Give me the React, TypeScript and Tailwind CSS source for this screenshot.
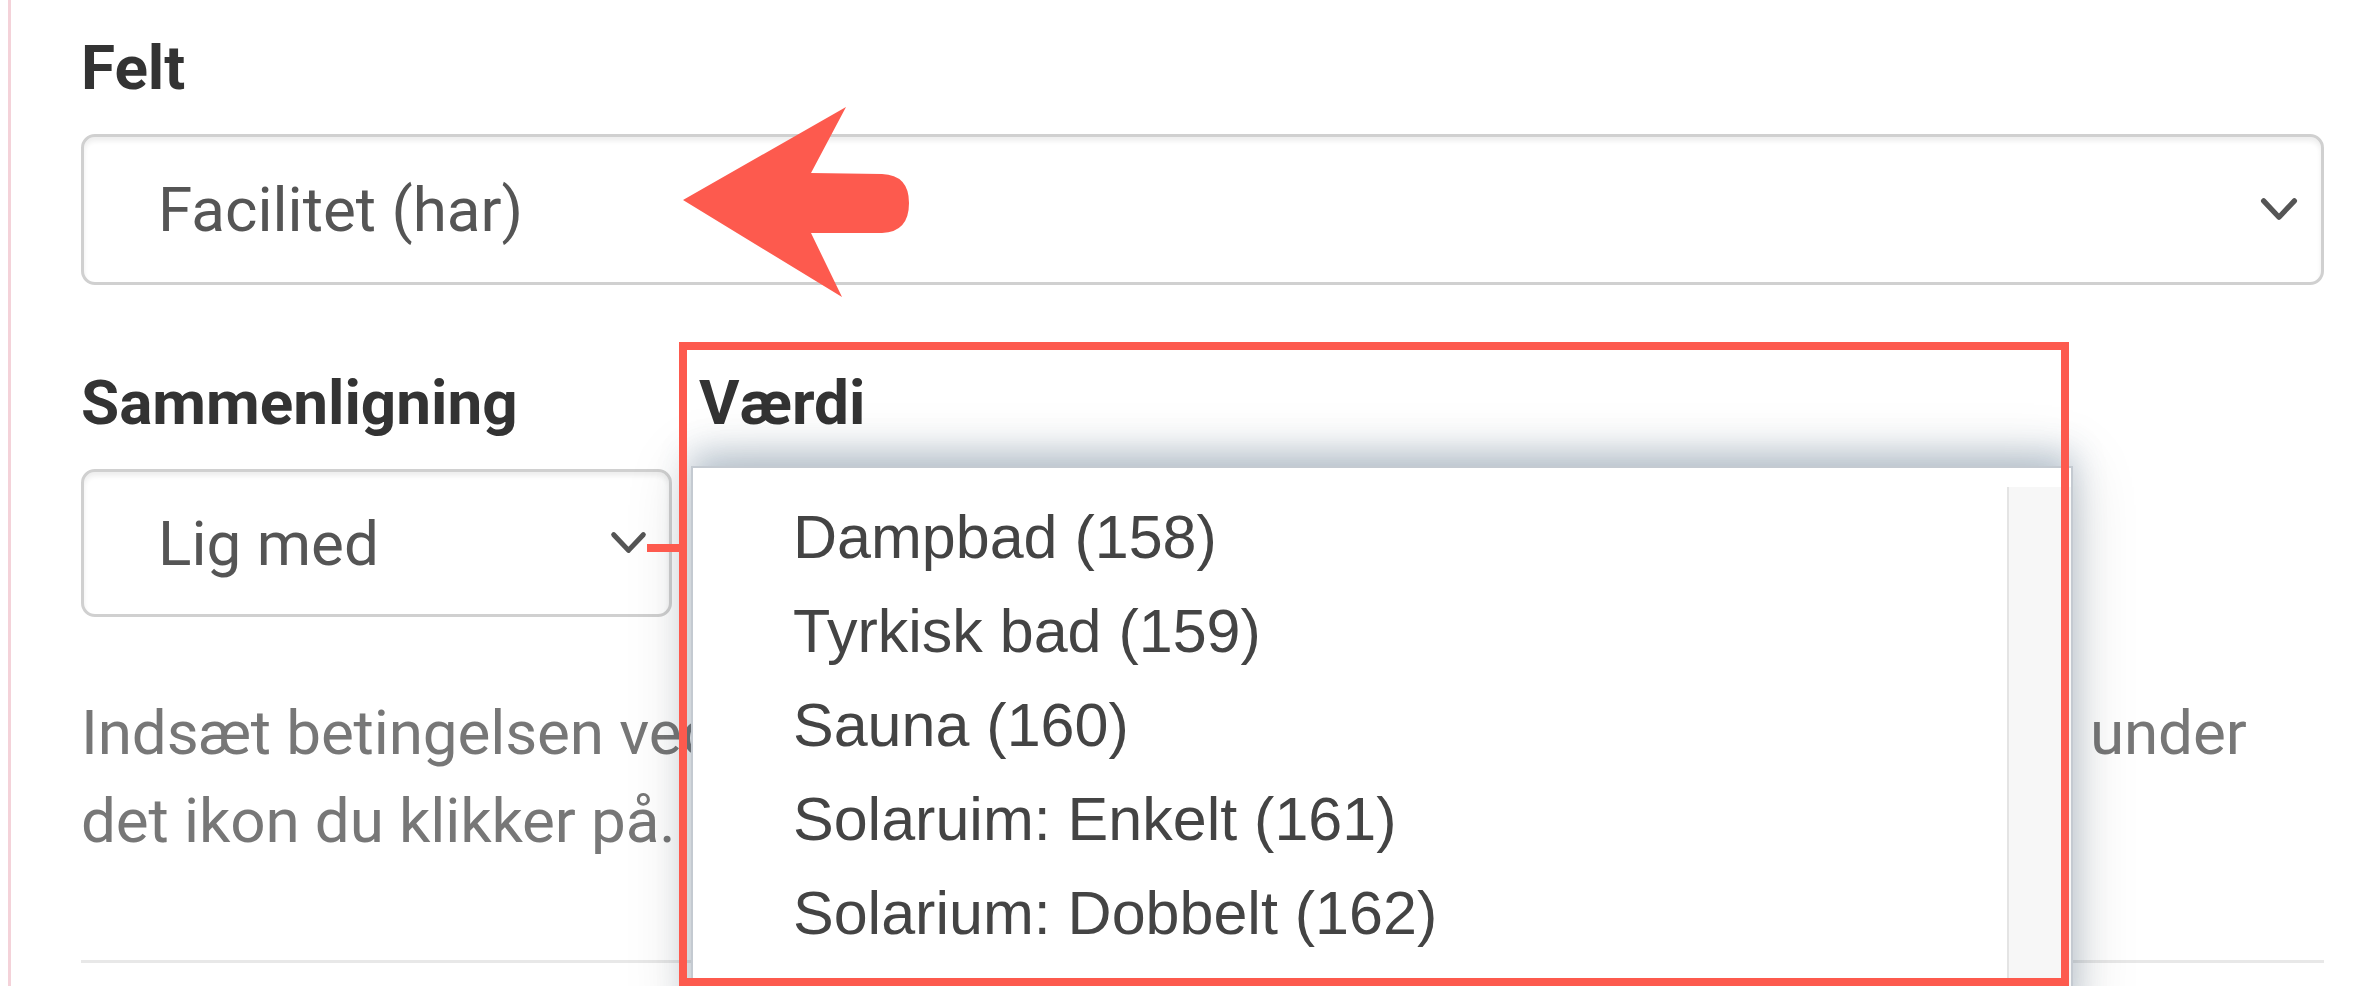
import React from "react";

const options = [
  "Dampbad (158)",
  "Tyrkisk bad (159)",
  "Sauna (160)",
  "Solaruim: Enkelt (161)",
  "Solarium: Dobbelt (162)",
];

function Chevron({ className }: { className?: string }) {
  return (
    <svg
      viewBox="0 0 40 26"
      className={className}
      fill="none"
      stroke="#555"
      strokeWidth="5.5"
      strokeLinecap="round"
      strokeLinejoin="round"
    >
      <polyline points="4,4 20,21 36,4" />
    </svg>
  );
}

function FakeSelect({
  value,
  className,
  chevron,
}: {
  value: string;
  className: string;
  chevron: string;
}) {
  return (
    <div
      className={`flex items-center justify-between rounded-[14px] border-[3px] border-[#d0d0d0] bg-white pl-[74px] pr-[22px] text-[62px] text-[#555] shadow-[inset_0_4px_5px_rgba(0,0,0,0.07)] ${className}`}
    >
      <span>{value}</span>
      <Chevron className={chevron} />
    </div>
  );
}

export default function App() {
  return (
    <div className="relative h-[986px] w-full overflow-hidden bg-white font-['Roboto',sans-serif]">
      {/* form panel */}
      <div className="ml-[8px] h-full border-l-[3px] border-[#f4d2d9] pl-[70px] pr-[32px] pt-[24px]">
        <label className="block text-[62px] font-bold leading-[88px] text-[#333]">
          Felt
        </label>
        <FakeSelect
          value="Facilitet (har)"
          className="mt-[22px] h-[151px]"
          chevron="h-[25px] w-[40px]"
        />

        <div className="mt-[74px] flex gap-[27px]">
          <div className="w-[591px]">
            <label className="block text-[62px] font-bold leading-[88px] text-[#333]">
              Sammenligning
            </label>
            <FakeSelect
              value="Lig med"
              className="mt-[22px] h-[148px]"
              chevron="h-[24px] w-[37px]"
            />
          </div>
          <div className="flex-1">
            <label className="block text-[62px] font-bold leading-[88px] text-[#333]">
              Værdi
            </label>
          </div>
        </div>

        <p className="mt-[72px] text-[62px] leading-[88px] tracking-[-0.13px] text-[#777]">
          Indsæt betingelsen ved at klikke på et af ikonerne nedenfor. Den
          placeres under det ikon du klikker på.
        </p>
        <div className="mt-[95px] border-t-[3px] border-[#e8e8e8]" />
      </div>

      {/* open native list for Værdi */}
      <div className="absolute left-[691px] top-[466px] h-[560px] w-[1382px] border-2 border-[#c4cad1] bg-white pt-[22px] font-['Liberation_Sans',Arial,sans-serif] shadow-[0_0_60px_rgba(0,0,0,0.18),0_-14px_30px_rgba(70,110,150,0.28)]">
        <div className="absolute bottom-0 left-[1314px] right-0 top-[19px] border-l-2 border-[#e4e4e4] bg-[#f7f7f7]" />
        {options.map((o) => (
          <div key={o} className="h-[94px] pl-[100px] text-[61px] leading-[94px] text-[#444]">
            {o}
          </div>
        ))}
      </div>

      {/* annotations */}
      <div className="absolute left-[679px] top-[342px] h-[644px] w-[1390px] border-[8px] border-[#fd5a4e]" />
      <div className="absolute left-[647px] top-[544px] h-[8px] w-[36px] bg-[#fd5a4e]" />
      <svg
        className="absolute left-[670px] top-[95px]"
        width="250"
        height="215"
        viewBox="0 0 250 215"
      >
        <path
          d="M13 105 L176 12 L141 78 L212 79 Q239 80 239 108 Q239 137 212 138 L141 138 L172 202 Z"
          fill="#fd5a4e"
        />
      </svg>
    </div>
  );
}
